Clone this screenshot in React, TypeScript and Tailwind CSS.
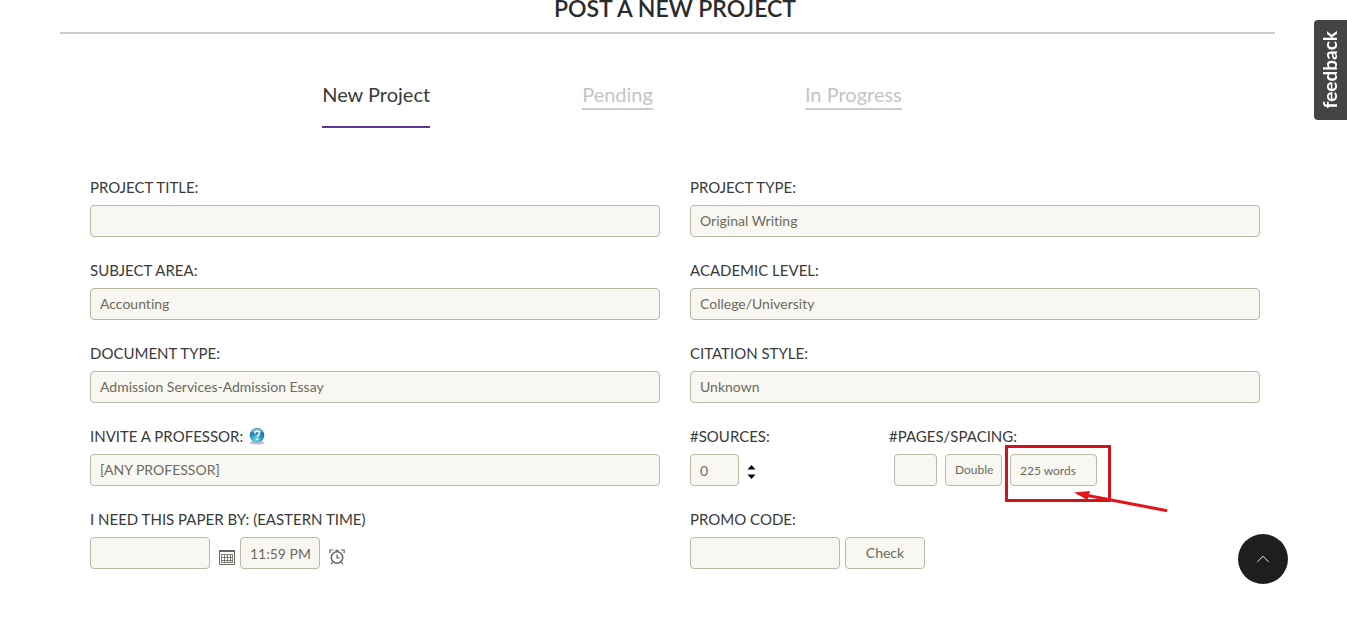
import React from 'react';
import { ChevronUp } from 'lucide-react';

const fieldClass =
  'h-8 appearance-none rounded border border-[#b9b9a6] bg-[#f9f7f1] text-sm text-[#6b6b60] focus:outline-none';

interface FieldProps {
  id: string;
  label: string;
  icon?: React.ReactNode;
  children: React.ReactNode;
}

const Field: React.FC<FieldProps> = ({ id, label, icon, children }) => (
  <div className="flex flex-col gap-2">
    <div className="flex h-5 items-center gap-[5px]">
      <label htmlFor={id} className="text-[15px] leading-5 whitespace-nowrap">
        {label}
      </label>
      {icon}
    </div>
    {children}
  </div>
);

const SelectField: React.FC<Omit<FieldProps, 'children'> & { value: string }> = ({ value, ...rest }) => (
  <Field {...rest}>
    <select id={rest.id} className={`${fieldClass} w-full px-[9px]`}>
      <option>{value}</option>
    </select>
  </Field>
);

const HelpIcon = () => (
  <svg width="18" height="18" viewBox="0 0 18 18" aria-hidden="true">
    <defs>
      <radialGradient id="globe" cx="0.45" cy="0.8" r="0.8">
        <stop offset="0" stopColor="#6fdcf2" />
        <stop offset="0.5" stopColor="#2a93bd" />
        <stop offset="1" stopColor="#1c6088" />
      </radialGradient>
    </defs>
    <ellipse cx="9" cy="15.8" rx="7.5" ry="1.7" fill="#b9a9b4" opacity="0.8" />
    <circle cx="9" cy="8.3" r="7.3" fill="url(#globe)" />
    <path d="M3.2 5.6C4.3 2.8 6.7 1.5 9 1.5s4.7 1.3 5.8 4.1C12.5 4.5 5.5 4.5 3.2 5.6z" fill="#a9d9ea" opacity="0.75" />
    <path
      d="M6.9 6.6c0-1.5 1-2.3 2.3-2.3s2.3.8 2.3 2c0 1.700-2.200 1.800-2.200 3.500"
      fill="none"
      stroke="#fff"
      strokeWidth="1.5"
    />
    <circle cx="9.3" cy="12" r="1" fill="#fff" />
  </svg>
);

const CalendarIcon = () => (
  <svg width="16" height="15" viewBox="0 0 16 15" fill="none" stroke="#66665f" aria-hidden="true">
    <path d="M0 1h16" strokeWidth="2" />
    <path d="M.5 1v13.500h15V1" />
    <path d="M2.500 4.500h11M2.500 7.500h11M2.500 10.500h11M2.500 12.500h11M2.500 4v9M5.500 4v9M8.500 4v9M11.500 4v9M13.500 4v9" strokeWidth="0.8" />
  </svg>
);

const ClockIcon = () => (
  <svg width="16" height="16" viewBox="0 0 16 16" fill="none" stroke="#66665f" aria-hidden="true">
    <circle cx="8" cy="8.500" r="5.700" strokeWidth="1.600" />
    <path d="M8 5.500v3.300h2.500" strokeWidth="1.200" />
    <path d="M.8 4V1h3.400M15.200 4V1h-3.400M3.800 12.800l-1.800 2.700M12.200 12.800l1.800 2.700M6.500 1.300h3" strokeWidth="1.200" />
  </svg>
);

export default function App() {
  return (
    <div className="relative bg-white pr-[72px] pl-[60px] font-['Lato',sans-serif] text-[#3a3a3a] [font-variant-ligatures:none]">
      <h1 className="-mt-2 border-b-2 border-[#ccc] pb-2 pl-[15px] text-center text-[23px] leading-8 font-semibold text-[#2b2b2b]">
        POST A NEW PROJECT
      </h1>

      <nav className="flex items-start justify-center gap-[152px] pt-[46px] pr-[111px] text-xl leading-7">
        <a href="#new" className="border-b-2 border-[#5b3a9b] pb-[18px]">
          New Project
        </a>
        <a href="#pending" className="border-b-2 border-[#ccc] text-[#c4c4c4]">
          Pending
        </a>
        <a href="#progress" className="border-b-2 border-[#ccc] text-[#c4c4c4]">
          In Progress
        </a>
      </nav>

      <form className="grid grid-cols-2 gap-x-[30px] gap-y-[23px] pt-[49px] pr-[15px] pb-[54px] pl-[30px]">
        <Field id="title" label="PROJECT TITLE:">
          <input id="title" type="text" className={`${fieldClass} w-full px-[9px]`} />
        </Field>
        <SelectField id="type" label="PROJECT TYPE:" value="Original Writing" />
        <SelectField id="subject" label="SUBJECT AREA:" value="Accounting" />
        <SelectField id="level" label="ACADEMIC LEVEL:" value="College/University" />
        <SelectField id="document" label="DOCUMENT TYPE:" value="Admission Services-Admission Essay" />
        <SelectField id="citation" label="CITATION STYLE:" value="Unknown" />
        <SelectField id="professor" label="INVITE A PROFESSOR:" value="[ANY PROFESSOR]" icon={<HelpIcon />} />

        <div className="flex">
          <div className="w-[199px]">
            <Field id="sources" label="#SOURCES:">
              <div className="flex items-center gap-2">
                <input id="sources" type="text" defaultValue="0" className={`${fieldClass} w-[49px] px-[9px]`} />
                <button type="button" aria-label="Change sources" className="pt-1">
                  <svg width="9" height="14" viewBox="0 0 9 14" fill="#000">
                    <path d="M0.500 4.500L4.500 0l4 4.500zM0.500 9.500L4.500 14l4-4.500z" />
                  </svg>
                </button>
              </div>
            </Field>
          </div>
          <Field id="pages" label="#PAGES/SPACING:">
            <div className="flex gap-2 pl-[5px]">
              <input id="pages" type="text" className={`${fieldClass} w-[43px] px-[9px]`} />
              <select aria-label="Spacing" className={`${fieldClass} w-[57px] pl-[9px] text-xs`}>
                <option>Double</option>
              </select>
              <div className="relative">
                <input
                  type="text"
                  aria-label="Word count"
                  defaultValue="225 words"
                  readOnly
                  className={`${fieldClass} block w-[87px] px-[9px] text-xs`}
                />
                <svg
                  className="pointer-events-none absolute -top-[9px] -left-[5px]"
                  width="164"
                  height="68"
                  viewBox="0 0 164 68"
                  fill="none"
                  aria-hidden="true"
                >
                  <rect x="1.500" y="1.500" width="103" height="54" stroke="#d0141c" strokeWidth="3" />
                  <path d="M80 50L161 65.500" stroke="#e3141a" strokeWidth="3" strokeLinecap="round" />
                  <path d="M69 47.500L85 46l-2.500 9z" fill="#e3141a" />
                </svg>
              </div>
            </div>
          </Field>
        </div>

        <Field id="date" label="I NEED THIS PAPER BY: (EASTERN TIME)">
          <div className="flex items-end">
            <input id="date" type="text" className={`${fieldClass} w-[120px] px-[9px]`} />
            <button type="button" aria-label="Pick a date" className="mr-[5px] mb-1 ml-[9px]">
              <CalendarIcon />
            </button>
            <input type="text" aria-label="Time" defaultValue="11:59 PM" className={`${fieldClass} w-20 px-[9px]`} />
            <button type="button" aria-label="Pick a time" className="mb-1 ml-[9px]">
              <ClockIcon />
            </button>
          </div>
        </Field>
        <Field id="promo" label="PROMO CODE:">
          <div className="flex gap-[5px]">
            <input id="promo" type="text" className={`${fieldClass} w-[150px] px-[9px]`} />
            <button type="button" className={`${fieldClass} w-20`}>
              Check
            </button>
          </div>
        </Field>
      </form>

      <button
        type="button"
        className="fixed top-5 right-0 flex h-[100px] w-[33px] items-center justify-center rounded-l bg-[#444] text-[19px] font-bold text-white"
      >
        <span className="rotate-180 [writing-mode:vertical-rl]">feedback</span>
      </button>

      <a
        href="#top"
        aria-label="Back to top"
        className="fixed right-[59px] bottom-[39px] flex size-[50px] items-center justify-center rounded-full bg-[#1e1e1e] text-white"
      >
        <ChevronUp size={22} strokeWidth={1} />
      </a>
    </div>
  );
}
